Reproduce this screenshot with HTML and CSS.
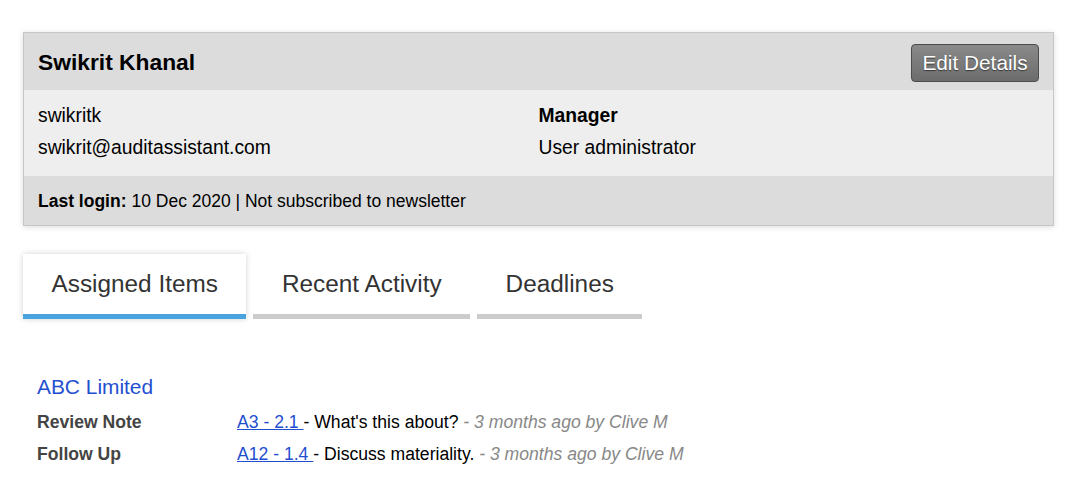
FILE: index.html
```html
<!DOCTYPE html>
<html lang="en">
<head>
<meta charset="utf-8">
<title>User profile</title>
<link rel="stylesheet" href="styles.css">
</head>
<body>
<main class="page">
  <section class="card">
    <header class="card-head">
      <h1 class="name">Swikrit Khanal</h1>
      <button class="btn" type="button">Edit Details</button>
    </header>
    <div class="card-body">
      <div class="col">
        <div class="line">swikritk</div>
        <div class="line">swikrit@auditassistant.com</div>
      </div>
      <div class="col">
        <div class="line strong">Manager</div>
        <div class="line">User administrator</div>
      </div>
    </div>
    <footer class="card-foot">
      <strong>Last login:</strong> 10 Dec 2020 | Not subscribed to newsletter
    </footer>
  </section>

  <nav class="tabs">
    <div class="tab active">Assigned Items</div>
    <div class="tab">Recent Activity</div>
    <div class="tab">Deadlines</div>
  </nav>

  <section class="items">
    <div class="client">ABC Limited</div>
    <div class="row">
      <div class="label">Review Note</div>
      <div class="desc"><a href="#">A3 - 2.1 </a>- What's this about? <span class="meta">- 3 months ago by Clive M</span></div>
    </div>
    <div class="row">
      <div class="label">Follow Up</div>
      <div class="desc"><a href="#">A12 - 1.4 </a>- Discuss materiality. <span class="meta">- 3 months ago by Clive M</span></div>
    </div>
  </section>
</main>
</body>
</html>
```

FILE: styles.css
```css
* { box-sizing: border-box; }
html, body { margin: 0; padding: 0; background: #fff; }
body {
  font-family: "Liberation Sans", Arial, sans-serif;
  color: #000;
}
.page {
  padding: 32px 28px 0 23px;
}
.card {
  border: 1px solid #c6c6c6;
  box-shadow: 0 1px 6px rgba(0, 0, 0, 0.14);
  background: #eee;
}
.card-head {
  height: 57px;
  background: #dcdcdc;
  display: flex;
  align-items: center;
  justify-content: space-between;
  padding: 0 14px;
}
.name {
  margin: 0;
  font-size: 22.8px;
  font-weight: bold;
  line-height: 1;
  padding-top: 2px;
}
.btn {
  width: 128px;
  height: 38px;
  margin-top: 3px;
  border: 1px solid #4c4c4c;
  border-radius: 4px;
  background: linear-gradient(#8a8a8a, #6c6c6c);
  color: #fff;
  font-family: "Liberation Sans", Arial, sans-serif;
  font-size: 20.8px;
  text-shadow: 0 1px 1px rgba(0, 0, 0, 0.55);
  padding: 0;
  cursor: pointer;
}
.card-body {
  display: grid;
  grid-template-columns: 1fr 1fr;
  padding: 10px 14px 12px;
  background: #eee;
}
.line {
  font-size: 19.3px;
  line-height: 32px;
}
.strong { font-weight: bold; }
.card-foot {
  height: 49px;
  background: #dcdcdc;
  padding: 2px 14px 0;
  display: flex;
  align-items: center;
  gap: 5px;
  font-size: 17.5px;
}
.tabs {
  display: flex;
  gap: 7px;
  margin-top: 28px;
}
.tab {
  height: 65px;
  line-height: 59px;
  padding: 0 28.5px;
  font-size: 24.35px;
  color: #333;
  border-bottom: 5px solid #cccccc;
}
.tab.active {
  background: #fff;
  border-bottom-color: #49a3dc;
  box-shadow: 0 0 6px rgba(0, 0, 0, 0.18);
}
.items {
  padding: 54px 14px 0;
}
.client {
  font-size: 20.9px;
  line-height: 28px;
  color: #1f4fd0;
  margin-bottom: 5px;
}
.row {
  display: grid;
  grid-template-columns: 200px 1fr;
  font-size: 17.6px;
  line-height: 32px;
}
.label {
  font-weight: bold;
  color: #444;
}
.desc a {
  color: #1f4fd0;
  text-decoration: underline;
}
.meta {
  color: #888;
  font-style: italic;
}
```
